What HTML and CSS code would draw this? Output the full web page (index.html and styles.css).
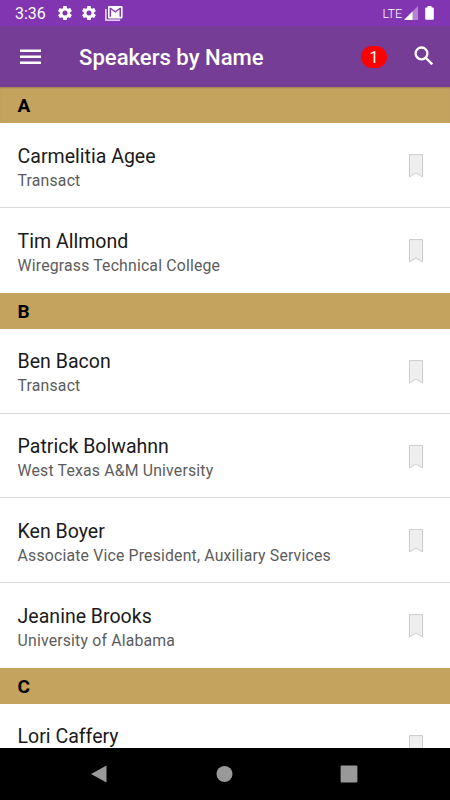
FILE: index.html
```html
<!DOCTYPE html>
<html lang="en">
<head>
<meta charset="utf-8">
<title>Speakers by Name</title>
<link rel="stylesheet" href="styles.css">
</head>
<body>
<svg class="defs" width="0" height="0" aria-hidden="true">
  <symbol id="gear" viewBox="2 2 20 20"><path fill-rule="evenodd" d="M19.4 13c.05-.3.06-.65.06-1s-.02-.68-.06-1l2.1-1.65c.2-.15.25-.42.12-.64l-2-3.46c-.12-.22-.38-.3-.6-.22l-2.5 1c-.52-.4-1.08-.73-1.7-.98L14.44 2.4A.5.5 0 0 0 13.95 2h-4c-.25 0-.46.18-.5.42L9.1 5.07c-.62.25-1.18.58-1.7.98l-2.48-1c-.23-.1-.5 0-.61.22l-2 3.46c-.13.22-.08.5.12.64L4.54 11c-.04.32-.07.66-.07 1s.03.68.07 1l-2.11 1.65c-.2.15-.25.42-.12.64l2 3.46c.11.22.38.3.61.22l2.48-1c.52.4 1.08.73 1.7.98l.38 2.65c.03.24.24.42.49.42h4c.25 0 .46-.18.49-.42l.38-2.65c.62-.25 1.18-.58 1.7-.98l2.48 1c.23.1.5 0 .61-.22l2-3.46a.5.5 0 0 0-.12-.64zM12 15.6a3.6 3.6 0 1 1 0-7.2 3.6 3.6 0 0 1 0 7.2z"/></symbol>
  <symbol id="bookmark" viewBox="0 0 14 24"><path d="M.5.6h13v22.300L7 19 .5 22.900z"/></symbol>
</svg>
<div class="screen">
  <header class="status">
    <span class="time">3:36</span>
    <svg class="gear"><use href="#gear"/></svg>
    <svg class="gear second"><use href="#gear"/></svg>
    <svg class="mail" viewBox="0 0 18 15"><path fill="none" stroke="#fff" stroke-width="1.3" d="M.9 3v11.2h14.300"/><path fill-rule="evenodd" d="M4 0h12.600q1 0 1 1v10.400q0 1-1 1H4q-1 0-1-1V1q0-1 1-1zM4.600 1.700v9.100h1.500V3.500l4.200 3.200 4.200-3.200v7.300H16V1.700h-1.200l-4.500 3.400-4.500-3.400z"/></svg>
    <span class="lte">LTE</span>
    <svg class="signal" viewBox="0 0 14 14"><path opacity=".4" d="M14 0v14H0z"/><path d="M8.500 5.500V14H0z"/></svg>
    <svg class="battery" viewBox="0 0 9 14"><path d="M2.500 0h4v1.400h1.300q1 0 1 1v10.400q0 1-1 1H1.200q-1 0-1-1V2.400q0-1 1-1h1.300z"/></svg>
  </header>
  <div class="appbar">
    <svg class="menu" viewBox="0 0 21 16"><path d="M0 .5h21v2.500H0zM0 6.400h21v2.500H0zM0 12.400h21v2.500H0z"/></svg>
    <h1 class="title">Speakers by Name</h1>
    <span class="count">1</span>
    <svg class="search" viewBox="0 0 20 20"><circle cx="7.500" cy="7.400" r="5.900"/><path d="M11.700 11.700l6.600 6.700"/></svg>
  </div>
  <main class="list">
    <h2 class="letter first">A</h2>
    <div class="row"><div><div class="name">Carmelitia Agee</div><div class="org">Transact</div></div><svg class="mark"><use href="#bookmark"/></svg></div>
    <div class="row"><div><div class="name">Tim Allmond</div><div class="org">Wiregrass Technical College</div></div><svg class="mark"><use href="#bookmark"/></svg></div>
    <h2 class="letter">B</h2>
    <div class="row"><div><div class="name">Ben Bacon</div><div class="org">Transact</div></div><svg class="mark"><use href="#bookmark"/></svg></div>
    <div class="row"><div><div class="name">Patrick Bolwahnn</div><div class="org">West Texas A&amp;M University</div></div><svg class="mark"><use href="#bookmark"/></svg></div>
    <div class="row"><div><div class="name">Ken Boyer</div><div class="org">Associate Vice President, Auxiliary Services</div></div><svg class="mark"><use href="#bookmark"/></svg></div>
    <div class="row"><div><div class="name">Jeanine Brooks</div><div class="org">University of Alabama</div></div><svg class="mark"><use href="#bookmark"/></svg></div>
    <h2 class="letter">C</h2>
    <div class="row"><div><div class="name">Lori Caffery</div></div><svg class="mark"><use href="#bookmark"/></svg></div>
  </main>
  <nav class="nav">
    <svg viewBox="0 0 18 18"><path d="M16.500.5v17L1 9z"/></svg>
    <svg viewBox="0 0 18 18"><circle cx="9.500" cy="9" r="8"/></svg>
    <svg viewBox="0 0 18 18"><rect x=".6" y=".6" width="16.800" height="16.800" rx="1"/></svg>
  </nav>
</div>
</body>
</html>
```
FILE: styles.css
```css
* { box-sizing: border-box; }
body { margin: 0; font-family: Roboto, sans-serif; }
.defs { position: absolute; }
.screen { width: 450px; height: 800px; overflow: hidden; display: flex; flex-direction: column; background: #fff; }
.status { height: 26px; flex: none; display: flex; align-items: center; padding: 0 16px 0 15px; background: #8135b0; color: #fff; fill: #fff; }
.time { width: 43px; font-size: 16px; line-height: 20px; padding-top: 2px; }
.gear { width: 14px; height: 14px; }
.second { margin-left: 10px; }
.mail { width: 18px; height: 15px; margin-left: 9px; }
.lte { margin-left: auto; font-size: 12.5px; font-weight: 300; }
.signal { width: 14px; height: 14px; margin-left: 2px; }
.battery { width: 9px; height: 14px; margin-left: 7px; }
.appbar { height: 61.450px; flex: none; display: flex; align-items: center; padding: 0 16.500px 0 20px; background: #753d96; color: #fff; }
.menu { width: 21px; height: 16px; fill: #fff; }
.title { margin: 1px 0 0 38px; font-size: 22.100px; font-weight: 500; line-height: 28px; }
.count { width: 26px; height: 22px; margin-left: auto; margin-top: 1px; border-radius: 11px; background: #f00; text-align: center; font-size: 16px; line-height: 23px; }
.search { width: 20px; height: 20px; margin: -1px 0 0 26.500px; fill: none; stroke: #fff; stroke-width: 2.300; }
.list { flex: 1; min-height: 0; overflow: hidden; }
.letter { height: 35.800px; margin: 0; padding-left: 17.600px; background: #c4a35e; color: #000; font-size: 19px; font-weight: 700; line-height: 38px; }
.first { box-shadow: inset 0 2px 2px -1px #9c7f50; }
.row { height: 84.850px; display: flex; justify-content: space-between; padding: 20.500px 27px 0 17.600px; border-bottom: 1px solid #d9d9d9; }
.row:has(+ .letter) { border-bottom-color: transparent; }
.name { font-size: 19.550px; line-height: 26px; color: #1a1a1a; }
.org { font-size: 15.800px; letter-spacing: .18px; line-height: 22px; color: #5c5c5c; }
.mark { width: 14px; height: 24px; margin-top: 10.500px; fill: #efefef; stroke: #ccc; stroke-width: 1; }
.nav { height: 52.300px; flex: none; display: flex; justify-content: space-between; align-items: center; padding: 0 92px 0 90px; background: #000; fill: #999; }
.nav svg { width: 18px; height: 18px; }
```
